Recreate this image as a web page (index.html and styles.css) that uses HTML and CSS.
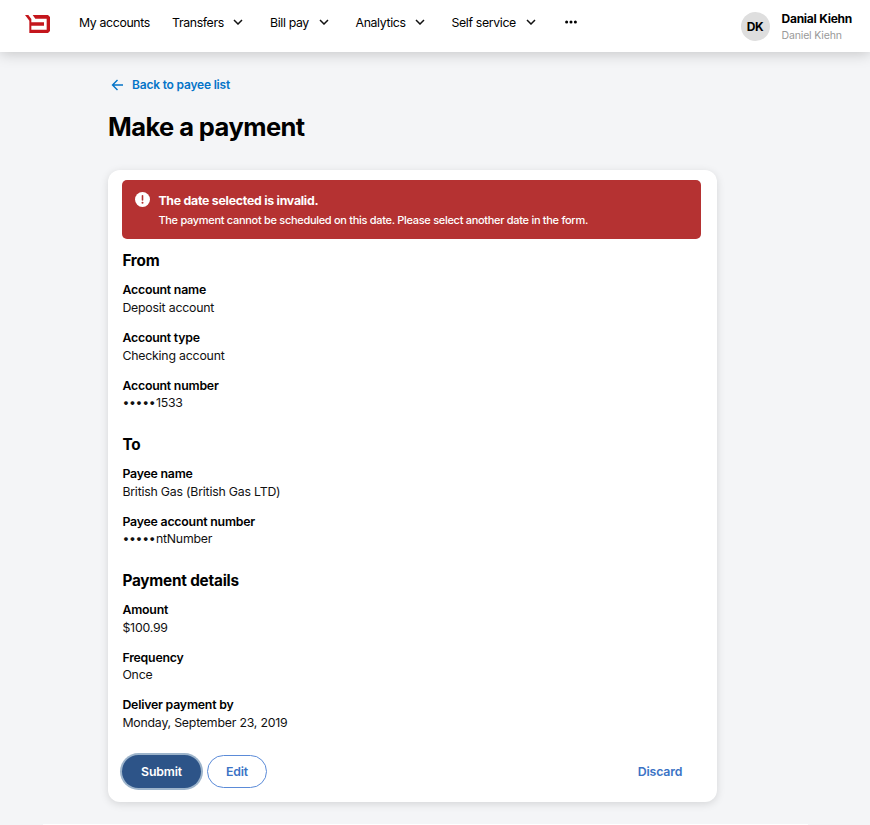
FILE: index.html
```html
<!DOCTYPE html>
<html lang="en">
<head>
<meta charset="utf-8">
<title>Make a payment</title>
<link rel="stylesheet" href="styles.css">
</head>
<body>
<header class="topbar">
  <svg class="logo" viewBox="0 0 75 54"><path d="M0 0H10L19 12V44H65V11H31L23 0H69L75 6V48L69 54H13V17ZM19 22H57V32H19Z" fill="#c4161c"/></svg>
  <nav class="nav">
    <a class="n1">My accounts</a>
    <a class="n2">Transfers<svg class="chev" viewBox="0 0 10 6"><path d="M1 1l4 4 4-4"/></svg></a>
    <a class="n3">Bill pay<svg class="chev" viewBox="0 0 10 6"><path d="M1 1l4 4 4-4"/></svg></a>
    <a class="n4">Analytics<svg class="chev" viewBox="0 0 10 6"><path d="M1 1l4 4 4-4"/></svg></a>
    <a class="n5">Self service<svg class="chev" viewBox="0 0 10 6"><path d="M1 1l4 4 4-4"/></svg></a>
    <svg class="more" viewBox="0 0 12 4"><circle cx="1.6" cy="2" r="1.5"/><circle cx="6" cy="2" r="1.5"/><circle cx="10.4" cy="2" r="1.5"/></svg>
  </nav>
  <div class="user">
    <div class="avatar">DK</div>
    <div class="who"><strong>Danial Kiehn</strong><span>Daniel Kiehn</span></div>
  </div>
</header>
<main class="page">
  <a class="back"><svg viewBox="0 0 12 12"><path d="M11.5 6H1M6 1L1 6l5 5"/></svg>Back to payee list</a>
  <h1>Make a payment</h1>
  <section class="card">
    <div class="alert">
      <svg viewBox="0 0 15 15"><circle cx="7.5" cy="7.5" r="7.5" fill="#fff"/><path d="M7.5 3.8v4.2" stroke="#b53232" stroke-width="1.6" stroke-linecap="round"/><circle cx="7.5" cy="10.8" r="1" fill="#b53232"/></svg>
      <div><strong>The date selected is invalid.</strong><p>The payment cannot be scheduled on this date. Please select another date in the form.</p></div>
    </div>
    <h2>From</h2>
    <dl>
      <div><dt>Account name</dt><dd>Deposit account</dd></div>
      <div><dt>Account type</dt><dd>Checking account</dd></div>
      <div><dt>Account number</dt><dd><span class="mask">•••••</span>1533</dd></div>
    </dl>
    <h2>To</h2>
    <dl>
      <div><dt>Payee name</dt><dd>British Gas (British Gas LTD)</dd></div>
      <div><dt>Payee account number</dt><dd><span class="mask">•••••</span>ntNumber</dd></div>
    </dl>
    <h2>Payment details</h2>
    <dl>
      <div><dt>Amount</dt><dd>$100.99</dd></div>
      <div><dt>Frequency</dt><dd>Once</dd></div>
      <div><dt>Deliver payment by</dt><dd>Monday, September 23, 2019</dd></div>
    </dl>
    <div class="actions">
      <button class="submit">Submit</button>
      <button class="edit">Edit</button>
      <button class="discard">Discard</button>
    </div>
  </section>
</main>
<footer class="foot"></footer>
</body>
</html>
```

FILE: styles.css
```css
* { box-sizing: border-box; }
body { margin: 0; height: 825px; overflow: hidden; background: #f4f5f7; color: #111; font-family: Inter, sans-serif; font-size: 12.3px; }
h1, h2, p, dl, dd { margin: 0; }
.topbar { height: 52px; background: #fff; box-shadow: 0 1px 14px rgba(0,0,0,.22); display: flex; align-items: flex-start; padding-left: 25px; }
.logo { width: 25px; height: 18px; margin-top: 14.5px; }
.nav { display: flex; align-items: center; height: 44px; margin-left: 29px; color: #000; letter-spacing: -.35px; }
.nav a { display: flex; align-items: center; justify-content: space-between; white-space: nowrap; }
.n1 { width: 93px; }
.n2 { width: 71px; margin-right: 27px; }
.n3 { width: 59px; margin-right: 26.5px; }
.n4 { width: 69.5px; margin-right: 26.5px; }
.n5 { width: 84px; margin-right: 29.5px; }
.chev { width: 10px; height: 6px; fill: none; stroke: #111; stroke-width: 1.5; }
.more { width: 12px; height: 4px; }
.user { display: flex; margin: 11px 18px 0 auto; gap: 12px; }
.avatar { width: 29px; height: 29px; border-radius: 50%; background: #dedede; color: #000; display: flex; align-items: center; justify-content: center; font-weight: 700; margin-top: 1px; font-size: 12px; letter-spacing: -.4px; }
.who { white-space: nowrap; }
.who strong { display: block; font-size: 12px; line-height: 16px; letter-spacing: -.25px; color: #000; }
.who span { display: block; font-size: 10.5px; line-height: 18px; color: #999; letter-spacing: -.15px; }
.page { width: 609px; margin-left: 108px; padding-top: 24px; }
.back { display: flex; align-items: center; height: 17px; padding-left: 3px; color: #0474c8; font-weight: 600; font-size: 12px; letter-spacing: -.2px; }
.back svg { width: 13px; height: 12px; margin-right: 8px; fill: none; stroke: #0474c8; stroke-width: 1.4; }
h1 { font-size: 25.5px; line-height: 34px; margin-top: 17px; color: #000; letter-spacing: -.57px; }
.card { height: 632px; margin-top: 26px; background: #fff; border-radius: 12px; box-shadow: 0 2px 8px rgba(0,0,0,.13); padding: 10.4px 16px 0 14.4px; }
.alert { width: 579px; height: 59px; border-radius: 5px; background: #b53232; color: #fff; display: flex; padding: 12px 13px; gap: 8px; }
.alert svg { width: 15px; height: 15px; flex: none; }
.alert strong { display: block; line-height: 17px; font-size: 12.3px; letter-spacing: -.24px; }
.alert p { font-size: 11px; line-height: 16px; margin-top: 3px; font-weight: 500; white-space: nowrap; letter-spacing: -.3px; }
h2 { font-size: 15.3px; line-height: 20px; margin: 22.8px 0 10.3px; color: #000; letter-spacing: -.2px; }
.alert + h2 { margin-top: 11.7px; }
dl { display: grid; gap: 12.2px; }
dt, dd { line-height: 17.7px; font-size: 12.3px; letter-spacing: -.2px; }
dt { font-weight: 600; color: #000; }
.mask { display: inline-block; width: 33.5px; white-space: nowrap; letter-spacing: -.3px; }
.actions { display: flex; align-items: center; margin-top: 22.8px; margin-left: -.4px; }
button { font: 600 12.3px Inter, sans-serif; letter-spacing: -.15px; height: 33px; border-radius: 17px; padding: 0; background: #fff; color: #3b73c5; border: 0; }
.submit { width: 79px; background: #2d5488; color: #fff; box-shadow: 0 0 0 2px #9db4cb; margin-right: 6px; }
.edit { width: 60px; border: 1px solid #5b8bd8; }
.discard { width: 50px; margin-left: auto; margin-right: 16px; }
.foot { width: 765px; height: 10px; margin: 22px 0 0 43px; background: #fff; }
```
